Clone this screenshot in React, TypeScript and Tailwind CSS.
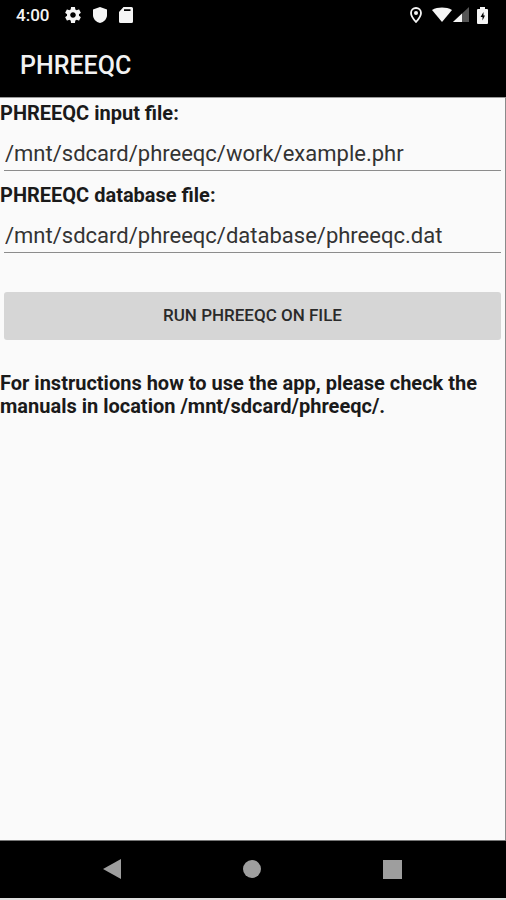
import { FC, useState } from "react";

interface FileFieldProps {
  id: string;
  label: string;
  value: string;
  onChange: (value: string) => void;
}

const FileField: FC<FileFieldProps> = ({ id, label, value, onChange }) => (
  <div className="flex flex-col">
    <label htmlFor={id} className="h-[30px] text-xl leading-[30px] font-bold">
      {label}
    </label>
    <div className="mx-1 mb-[9px]">
      <input
        id={id}
        type="text"
        value={value}
        onChange={(e) => onChange(e.target.value)}
        className="block h-[43px] w-full border-b border-[#8c8c8c] bg-transparent pt-2 pl-px text-[22px] text-[#333] outline-none"
      />
    </div>
  </div>
);

const StatusBar: FC = () => (
  <div className="flex h-[30px] items-center justify-between pr-[18px] pl-4 text-[#f5f5f5]">
    <div className="flex items-center gap-3">
      <span className="mr-1 text-[17px] leading-[30px] font-medium">4:00</span>
      <svg aria-hidden viewBox="2 2 20 20" className="h-4 w-4 fill-current">
        <path d="M19.43 12.98c.04-.32.07-.64.07-.98s-.03-.66-.07-.98l2.11-1.65c.19-.15.24-.42.12-.64l-2-3.46c-.12-.22-.39-.3-.61-.22l-2.49 1c-.52-.4-1.08-.73-1.69-.98l-.38-2.65C14.46 2.18 14.25 2 14 2h-4c-.25 0-.46.18-.49.42l-.38 2.65c-.61.25-1.17.59-1.69.98l-2.49-1c-.23-.09-.49 0-.61.22l-2 3.46c-.13.22-.07.49.12.64l2.11 1.65c-.04.32-.07.65-.07.98s.03.66.07.98l-2.11 1.65c-.19.15-.24.42-.12.64l2 3.46c.12.22.39.3.61.22l2.49-1c.52.4 1.08.73 1.69.98l.38 2.65c.03.24.24.42.49.42h4c.25 0 .46-.18.49-.42l.38-2.65c.61-.25 1.17-.59 1.69-.98l2.49 1c.23.09.49 0 .61-.22l2-3.46c.12-.22.07-.49-.12-.64l-2.11-1.65zM12 15.5c-1.93 0-3.5-1.57-3.5-3.5s1.57-3.5 3.5-3.5 3.5 1.57 3.5 3.5-1.57 3.5-3.5 3.5z" />
      </svg>
      <svg aria-hidden viewBox="0 0 14 16" className="h-4 w-[14px] fill-current">
        <path d="M7 0 0 2.5V8c0 4 3 7 7 8 4-1 7-4 7-8V2.5z" />
      </svg>
      <svg aria-hidden viewBox="0 0 14 16" className="h-4 w-[14px] fill-current">
        <path
          fillRule="evenodd"
          d="M4.5 0h8A1.5 1.5 0 0 1 14 1.5v13a1.5 1.5 0 0 1-1.5 1.5h-11A1.5 1.5 0 0 1 0 14.5V5zM5 2.2V4h6.500V2.2z"
        />
      </svg>
    </div>

    <div className="flex items-center">
      <svg aria-hidden viewBox="0 0 12 16" className="mr-[10px] h-4 w-3">
        <path
          d="M6 1a5 5 0 0 0-5 5c0 3.5 5 9 5 9s5-5.5 5-9a5 5 0 0 0-5-5z"
          fill="none"
          stroke="currentColor"
          strokeWidth="1.8"
        />
        <circle cx="6" cy="6" r="2" fill="currentColor" />
      </svg>
      <svg aria-hidden viewBox="0 0 20 16" className="h-4 w-5 fill-current">
        <path d="M0 3C6-.2 14-.2 20 3L10 15z" />
      </svg>
      <svg aria-hidden viewBox="0 0 16 16" className="ml-px h-4 w-4">
        <path d="M16 0v15H0z" fill="#555" />
        <path d="M9 6.5V15H0z" fill="currentColor" />
      </svg>
      <svg aria-hidden viewBox="0 0 11 17" className="ml-2 h-[17px] w-[11px]">
        <path
          d="M3 0h5v2h2a1 1 0 0 1 1 1v13a1 1 0 0 1-1 1H1a1 1 0 0 1-1-1V3a1 1 0 0 1 1-1h2z"
          fill="currentColor"
        />
        <path d="M6.5 5 3.5 10h2v3.500L8 8.500H6.500z" fill="#000" />
      </svg>
    </div>
  </div>
);

const navButtonClass = "flex h-full flex-1 items-center justify-center";

const NavigationBar: FC = () => (
  <nav className="flex h-[60px] border-t border-b-2 border-t-[#777] border-b-[#e0e0e0] bg-black pr-11 pb-px pl-[42px] text-[#9e9e9e]">
    <button type="button" aria-label="Back" className={navButtonClass}>
      <svg aria-hidden viewBox="0 0 18 20" className="h-5 w-[18px] fill-current">
        <path d="M18 0v20L0 10z" />
      </svg>
    </button>
    <button type="button" aria-label="Home" className={navButtonClass}>
      <span className="h-[18px] w-[18px] rounded-full bg-current" />
    </button>
    <button type="button" aria-label="Recent apps" className={navButtonClass}>
      <span className="h-[19px] w-[19px] bg-current" />
    </button>
  </nav>
);

export default function App() {
  const [inputFile, setInputFile] = useState("/mnt/sdcard/phreeqc/work/example.phr");
  const [databaseFile, setDatabaseFile] = useState("/mnt/sdcard/phreeqc/database/phreeqc.dat");

  return (
    <div className="flex min-h-screen flex-col bg-[#fafafa] font-[Roboto,sans-serif] text-[#1a1a1a]">
      <header className="bg-black">
        <StatusBar />
        <h1 className="h-[67px] px-5 pt-1 text-[25px] leading-16 font-medium text-[#f2f2f2]">PHREEQC</h1>
      </header>

      <main className="flex-1 border-t border-r border-t-[#9a9a9a] border-r-[#8a8a8a]">
        <FileField id="input-file" label="PHREEQC input file:" value={inputFile} onChange={setInputFile} />
        <FileField
          id="database-file"
          label="PHREEQC database file:"
          value={databaseFile}
          onChange={setDatabaseFile}
        />

        <div className="px-1 pt-[30px]">
          <button
            type="button"
            className="h-12 w-full rounded-[3px] bg-[#d6d6d6] text-[17px] font-medium text-[#2a2a2a] uppercase"
          >
            Run PHREEQC on file
          </button>
        </div>

        <p className="mt-8 text-xl leading-[23px] font-bold">
          For instructions how to use the app, please check the manuals in location /mnt/sdcard/phreeqc/.
        </p>
      </main>

      <NavigationBar />
    </div>
  );
}
